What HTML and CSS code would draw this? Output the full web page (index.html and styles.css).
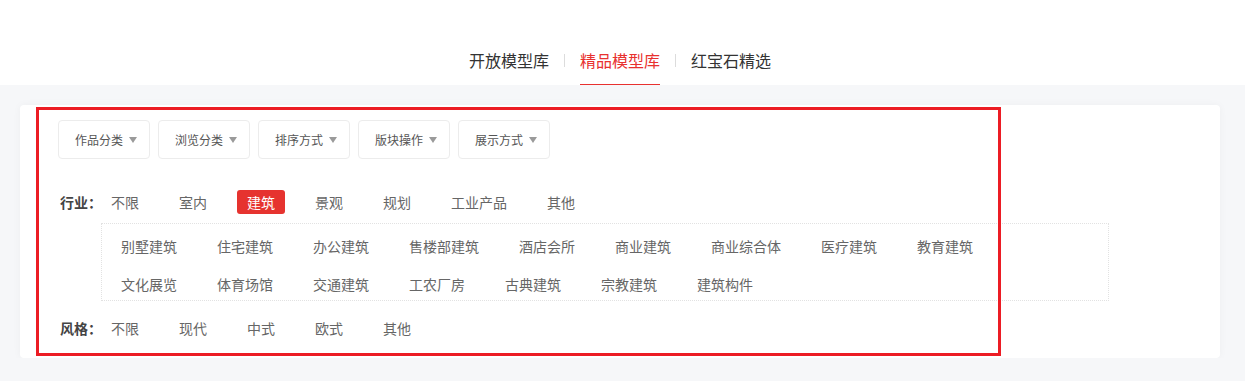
FILE: index.html
```html
<!DOCTYPE html>
<html lang="zh-CN">
<head>
  <meta charset="UTF-8" />
  <meta name="viewport" content="width=device-width, initial-scale=1.0"/>
  <title>精品模型库</title>
  <link rel="stylesheet" href="styles.css">
</head>
<body>
  <div class="top-nav">
    <a class="nav-tab">开放模型库</a>
    <span class="nav-sep"></span>
    <a class="nav-tab active">精品模型库</a>
    <span class="nav-sep"></span>
    <a class="nav-tab">红宝石精选</a>
  </div>

  <div class="main">
    <div class="filter-card">
      <div class="toolbar">
        <div class="drop-btn">作品分类<i class="caret"></i></div>
        <div class="drop-btn">浏览分类<i class="caret"></i></div>
        <div class="drop-btn">排序方式<i class="caret"></i></div>
        <div class="drop-btn">版块操作<i class="caret"></i></div>
        <div class="drop-btn">展示方式<i class="caret"></i></div>
      </div>

      <div class="filter-row industry-row">
        <span class="filter-label">行业：</span>
        <ul class="filter-opts">
          <li>不限</li>
          <li>室内</li>
          <li class="active">建筑</li>
          <li>景观</li>
          <li>规划</li>
          <li>工业产品</li>
          <li>其他</li>
        </ul>
      </div>

      <div class="sub-opts">
        <ul>
          <li>别墅建筑</li>
          <li>住宅建筑</li>
          <li>办公建筑</li>
          <li>售楼部建筑</li>
          <li>酒店会所</li>
          <li>商业建筑</li>
          <li>商业综合体</li>
          <li>医疗建筑</li>
          <li>教育建筑</li>
          <li>文化展览</li>
          <li>体育场馆</li>
          <li>交通建筑</li>
          <li>工农厂房</li>
          <li>古典建筑</li>
          <li>宗教建筑</li>
          <li>建筑构件</li>
        </ul>
      </div>

      <div class="filter-row style-row">
        <span class="filter-label">风格：</span>
        <ul class="filter-opts">
          <li>不限</li>
          <li>现代</li>
          <li>中式</li>
          <li>欧式</li>
          <li>其他</li>
        </ul>
      </div>

      <div class="mark-box"></div>
    </div>
  </div>
</body>
</html>
```

FILE: styles.css
```css
* { margin: 0; padding: 0; box-sizing: border-box; }
body {
  background: #f6f7f9;
  font-family: "Noto Sans CJK SC", "Noto Sans", sans-serif;
  color: #333;
}
ul { list-style: none; }

/* top tabs */
.top-nav {
  height: 85px; background: #fff;
  display: flex; justify-content: center; align-items: flex-end;
  padding-right: 5px;
}
.nav-tab {
  font-size: 16px; line-height: 24px; color: #333;
  padding-bottom: 12px; border-bottom: 1px solid transparent;
  cursor: pointer;
}
.nav-tab.active { color: #e8312f; border-bottom-color: #e8312f; }
.nav-sep {
  width: 1px; height: 13px; background: #dcdcdc;
  margin: 0 15px 18px;
}

.main { padding: 20px 25px 0 20px; }

.filter-card {
  position: relative;
  width: 1200px;
  background: #fff; border-radius: 4px;
  box-shadow: 0 0 8px rgba(0, 0, 0, 0.04);
  padding: 15px 20px 18px 38px;
}

/* dropdown buttons */
.toolbar { display: flex; gap: 8px; }
.drop-btn {
  width: 92px; height: 39px;
  display: flex; align-items: center;
  padding: 0 11px 0 16px;
  border: 1px solid #ececec; border-radius: 4px;
  font-size: 12px; color: #555;
  cursor: pointer;
}
.caret {
  margin-left: 6px;
  width: 0; height: 0;
  border-left: 4px solid transparent;
  border-right: 4px solid transparent;
  border-top: 6px solid #9a9a9a;
}

/* filter rows */
.filter-row {
  display: flex; align-items: center;
  margin-left: 2px; height: 24px;
  font-size: 14px;
}
.industry-row { margin-top: 31px; }
.style-row { margin-top: 15px; }
.filter-label {
  width: 41px; flex-shrink: 0; white-space: nowrap;
  font-weight: bold; color: #444;
}
.filter-opts { display: flex; }
.filter-opts li {
  padding: 0 10px; margin-right: 20px;
  line-height: 24px; color: #666;
  border-radius: 3px; cursor: pointer;
}
.filter-opts li.active { background: #e6332f; color: #fff; }

/* sub categories */
.sub-opts {
  margin: 9px 0 0 43px; width: 1008px;
  border: 1px dotted #e2e2e2;
  padding: 9px 30px 3px 9px;
}
.sub-opts ul { display: flex; flex-wrap: wrap; row-gap: 12px; }
.sub-opts li {
  padding: 0 10px; margin-right: 20px;
  font-size: 14px; line-height: 26px; color: #666;
  cursor: pointer;
}

/* annotation frame drawn over the filters */
.mark-box {
  position: absolute; left: 16px; top: 2px;
  width: 965px; height: 249px;
  border: 3px solid #ec1c24;
  pointer-events: none;
}
```
